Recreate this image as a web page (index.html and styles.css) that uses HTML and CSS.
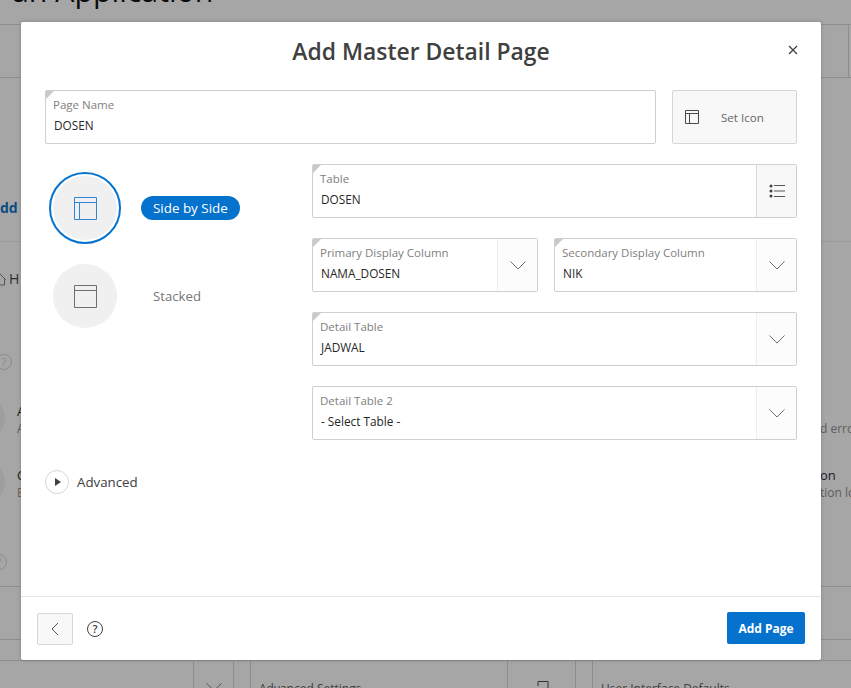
FILE: index.html
```html
<!DOCTYPE html>
<html lang="en">
<head>
<meta charset="utf-8">
<title>Add Master Detail Page</title>
<link rel="stylesheet" href="styles.css">
</head>
<body>
<div class="page">
  <div class="page-title"><span class="page-title-text">an Application</span></div>
  <div class="band">
    <span class="band-cell"></span>
  </div>
  <div class="bg-add"><span class="bg-add-text">dd</span></div>
  <div class="bg-home">
    <svg class="bg-house" width="6" height="13" viewBox="0 0 6 13"><path d="M-3 6.500L0 1L5.500 6.500H4.500V12H-1" fill="none" stroke="#5c4a63"/></svg>
    <span class="bg-home-text">H</span>
  </div>
  <div class="bg-help one"><span class="bg-q">?</span></div>
  <div class="bg-feature first">
    <span class="bg-disc"></span>
    <div class="bg-feature-text"><b>A</b><i>A</i></div>
    <div class="bg-feature-right"><b>&nbsp;</b><i>d error</i></div>
  </div>
  <div class="bg-feature">
    <span class="bg-disc"></span>
    <div class="bg-feature-text"><b>C</b><i class="rust">E</i></div>
    <div class="bg-feature-right"><b>on</b><i>tion lo</i></div>
  </div>
  <div class="bg-help two"><span class="bg-q">?</span></div>
  <div class="bg-rule first"></div>
  <div class="bg-rule second"></div>
  <div class="bg-tiles">
    <div class="tile-gap"></div>
    <div class="tile-btn"><svg width="16" height="8" viewBox="0 0 16 8"><path d="M.500.500L8 7.500L15.500.500" fill="none" stroke="#555"/></svg></div>
    <div class="tile-gap small"></div>
    <div class="tile-text">Advanced Settings</div>
    <div class="tile-btn wide"><svg width="14" height="16" viewBox="0 0 14 16"><path d="M3 5V.500H13V12H9M1 12H7" fill="none" stroke="#333"/></svg></div>
    <div class="tile-gap small"></div>
    <div class="tile-text">User Interface Defaults</div>
  </div>
</div>

<div class="modal">
  <header class="modal-head">
    <h1 class="modal-title">Add Master Detail Page</h1>
    <button class="close" aria-label="Close">
      <svg width="10" height="10" viewBox="0 0 10 10"><path d="M1 1L9 9M9 1L1 9" fill="none" stroke="#404040" stroke-width="1.300"/></svg>
    </button>
  </header>

  <main class="modal-body">
    <div class="top-row">
      <div class="field grow req">
        <div class="field-main">
          <span class="field-label">Page Name</span>
          <span class="field-value">DOSEN</span>
        </div>
      </div>
      <button class="set-icon">
        <svg width="14" height="14" viewBox="0 0 14 14"><path d="M.500.500H13.500V13.500H.500ZM.500 3.500H13.500M4.500 3.500V13.500" fill="none" stroke="#4a4a4a"/></svg>
        <span>Set Icon</span>
      </button>
    </div>

    <div class="columns">
      <div class="layouts">
        <div class="layout-option">
          <span class="disc-box">
            <span class="disc selected">
              <svg width="24" height="24" viewBox="0 0 24 24"><path d="M1.500 1.500H23.500V23.500H1.500ZM1.500 6.500H23.500M6.500 6.500V23.500" fill="none" stroke="#2f86d6"/></svg>
            </span>
          </span>
          <span class="layout-label pill">Side by Side</span>
        </div>
        <div class="layout-option">
          <span class="disc-box">
            <span class="disc">
              <svg width="24" height="24" viewBox="0 0 24 24"><path d="M1.500 1.500H23.500V23.500H1.500ZM1.500 6.500H23.500" fill="none" stroke="#6e6e6e"/></svg>
            </span>
          </span>
          <span class="layout-label">Stacked</span>
        </div>
      </div>

      <div class="fields">
        <div class="field req">
          <div class="field-main">
            <span class="field-label">Table</span>
            <span class="field-value">DOSEN</span>
          </div>
          <span class="field-btn filled">
            <svg width="16" height="14" viewBox="0 0 16 14"><g fill="#404040"><circle cx="2" cy="2" r="1.500"/><circle cx="2" cy="7" r="1.500"/><circle cx="2" cy="12" r="1.500"/></g><path d="M5 1.500H16M5 7H16M5 12.500H16" fill="none" stroke="#555"/></svg>
          </span>
        </div>

        <div class="field-pair">
          <div class="field primary req">
            <div class="field-main">
              <span class="field-label">Primary Display Column</span>
              <span class="field-value">NAMA_DOSEN</span>
            </div>
            <span class="field-btn">
              <svg class="chev" width="16" height="9" viewBox="0 0 16 9"><path d="M.500.500L8 8L15.500.500" fill="none" stroke="#707070"/></svg>
            </span>
          </div>
          <div class="field grow req">
            <div class="field-main">
              <span class="field-label">Secondary Display Column</span>
              <span class="field-value">NIK</span>
            </div>
            <span class="field-btn">
              <svg class="chev" width="16" height="9" viewBox="0 0 16 9"><path d="M.500.500L8 8L15.500.500" fill="none" stroke="#707070"/></svg>
            </span>
          </div>
        </div>

        <div class="field req">
          <div class="field-main">
            <span class="field-label">Detail Table</span>
            <span class="field-value">JADWAL</span>
          </div>
          <span class="field-btn">
            <svg class="chev" width="16" height="9" viewBox="0 0 16 9"><path d="M.500.500L8 8L15.500.500" fill="none" stroke="#707070"/></svg>
          </span>
        </div>

        <div class="field">
          <div class="field-main">
            <span class="field-label">Detail Table 2</span>
            <span class="field-value">- Select Table -</span>
          </div>
          <span class="field-btn">
            <svg class="chev" width="16" height="9" viewBox="0 0 16 9"><path d="M.500.500L8 8L15.500.500" fill="none" stroke="#707070"/></svg>
          </span>
        </div>
      </div>
    </div>

    <div class="advanced">
      <span class="advanced-toggle">
        <svg width="8" height="8" viewBox="0 0 8 8"><path d="M1 0L7 4L1 8Z" fill="#404040"/></svg>
      </span>
      <span class="advanced-label">Advanced</span>
    </div>
  </main>

  <footer class="modal-foot">
    <div class="foot-left">
      <button class="back" aria-label="Back">
        <svg width="8" height="14" viewBox="0 0 8 14"><path d="M7 1L1 7L7 13" fill="none" stroke="#4a5a6a"/></svg>
      </button>
      <span class="help">?</span>
    </div>
    <button class="add-page">Add Page</button>
  </footer>
</div>
</body>
</html>
```

FILE: styles.css
```css
* { box-sizing: border-box; }

html, body {
  margin: 0;
  padding: 0;
  height: 688px;
  overflow: hidden;
}

body {
  font-family: "Open Sans", "Noto Sans", "Liberation Sans", sans-serif;
  color: #262626;
  background: #a6a6a6;
}

button { font: inherit; cursor: pointer; }

/* dimmed application page behind the dialog */
.page {
  width: 851px;
  height: 688px;
  overflow: hidden;
  display: flex;
  flex-direction: column;
  background: #a6a6a6;
}

.page-title {
  height: 24px;
  padding-left: 12px;
  flex: none;
  overflow: hidden;
  font-size: 30.300px;
  line-height: 30px;
  white-space: nowrap;
  color: #0c0c0c;
}
.page-title-text { display: block; margin-top: -24px; }

.band {
  height: 54px;
  flex: none;
  display: flex;
  justify-content: flex-end;
  border-top: 1px solid #8e8e8e;
  border-bottom: 1px solid #8e8e8e;
}
.band-cell {
  width: 3px;
  border-left: 1px solid #8e8e8e;
}

.bg-add {
  height: 164px;
  flex: none;
  padding-top: 120px;
  border-bottom: 1px solid #9a9a9a;
  font-size: 14px;
  line-height: 20px;
  font-weight: 700;
  color: #0a4d84;
}
.bg-add-text { display: block; }

.bg-home {
  height: 47px;
  flex: none;
  display: flex;
  align-items: flex-end;
  gap: 3px;
  font-size: 14px;
  line-height: 20px;
  color: #2b2b2b;
}
.bg-house { margin-bottom: 3px; }

.bg-help {
  height: 20px;
  flex: none;
  display: flex;
  align-items: center;
}
.bg-help.one { margin: 63px 0 0 -4px; }
.bg-help.two { margin: 38px 0 0 -9px; }
.bg-q {
  width: 16px;
  height: 16px;
  flex: none;
  border: 1px solid #8c8c8c;
  border-radius: 50%;
  font-size: 11px;
  line-height: 14px;
  text-align: center;
  color: #8c8c8c;
}

.bg-feature {
  height: 64px;
  flex: none;
  display: flex;
  align-items: center;
}
.bg-feature.first { margin-top: 14px; }
.bg-disc {
  width: 48px;
  height: 48px;
  margin-left: -43px;
  margin-right: 12px;
  flex: none;
  border-radius: 50%;
  background: #9e9e9e;
}
.bg-feature-text,
.bg-feature-right {
  margin-top: 4px;
  display: flex;
  flex-direction: column;
  font-size: 12px;
  line-height: 17px;
}
.bg-feature b { font-weight: 400; font-size: 13px; color: #1c1c1c; }
.bg-feature i { font-style: normal; color: #5c5c5c; }
.bg-feature i.rust { color: #74605a; }
.bg-feature-right {
  margin-left: auto;
  width: 31px;
  white-space: nowrap;
  overflow: hidden;
}

.bg-rule {
  flex: none;
  border-top: 1px solid #8e8e8e;
}
.bg-rule.first { height: 53px; margin-top: 14px; }
.bg-rule.second { height: 21px; }

.bg-tiles {
  flex: 1;
  display: grid;
  grid-template-columns: 193px 41px 17px 256px 69px 17px 1fr;
  border-top: 1px solid #8e8e8e;
  font-size: 12px;
  color: #404040;
}
.tile-gap.small { border-right: 1px solid #8e8e8e; }
.tile-btn {
  display: flex;
  justify-content: center;
  padding-top: 22px;
  border-left: 1px solid #8e8e8e;
  border-right: 1px solid #8e8e8e;
}
.tile-btn.wide { padding-top: 20px; }
.tile-text {
  padding: 20px 0 0 8px;
  white-space: nowrap;
  line-height: 16px;
}

/* dialog */
.modal {
  position: absolute;
  left: 21px;
  top: 22px;
  width: 800px;
  height: 638px;
  display: flex;
  flex-direction: column;
  background: #fff;
  border-radius: 2px;
  box-shadow: 0 0 4px rgba(0, 0, 0, .2);
}

.modal-head {
  height: 68px;
  flex: none;
  display: flex;
  align-items: flex-start;
  justify-content: center;
  position: relative;
}
.modal-title {
  margin: 13px 0 0;
  font-size: 22.900px;
  line-height: 34px;
  font-weight: 600;
  color: #404040;
}
.close {
  position: absolute;
  right: 23px;
  top: 23px;
  width: 10px;
  height: 10px;
  padding: 0;
  border: 0;
  background: none;
  display: flex;
}

.modal-body {
  flex: 1;
  padding: 0 24px;
  display: flex;
  flex-direction: column;
}

.top-row {
  display: flex;
  gap: 16px;
  margin-bottom: 20px;
}

.field {
  position: relative;
  height: 54px;
  display: flex;
  background: #fff;
  border: 1px solid #cfcfcf;
  border-radius: 2px;
}
.field.req::before {
  content: "";
  position: absolute;
  left: 0;
  top: 0;
  border-style: solid;
  border-width: 8px 8px 0 0;
  border-color: #c9c9c9 transparent transparent transparent;
}
.field.grow { flex: 1; }
.field.primary { width: 226px; }

.field-main {
  flex: 1;
  min-width: 0;
  padding: 6px 7px 0;
  display: flex;
  flex-direction: column;
}
.field-label {
  font-size: 11.500px;
  line-height: 16px;
  color: #808080;
}
.field-value {
  margin-top: 4px;
  padding-left: 1px;
  font-size: 11.800px;
  line-height: 16px;
  color: #262626;
}
.field-btn {
  width: 40px;
  flex: none;
  display: flex;
  align-items: center;
  justify-content: center;
  background: #fcfcfc;
  border-left: 1px solid #eeeeee;
}
.field-btn.filled {
  background: #f8f8f8;
  border-left-color: #d6d6d6;
}

.set-icon {
  width: 125px;
  height: 54px;
  flex: none;
  padding: 0 0 0 12px;
  display: flex;
  align-items: center;
  gap: 22px;
  background: #f8f8f8;
  border: 1px solid #d6d6d6;
  border-radius: 2px;
  font-size: 11.600px;
  color: #666;
}

.columns {
  display: grid;
  grid-template-columns: 267px 485px;
}

.layouts {
  padding: 8px 0 0 4px;
  display: flex;
  flex-direction: column;
  gap: 20px;
}
.layout-option {
  display: flex;
  align-items: center;
  gap: 20px;
}
.disc-box {
  width: 72px;
  display: flex;
  justify-content: center;
}
.disc {
  width: 64px;
  height: 64px;
  display: flex;
  align-items: center;
  justify-content: center;
  border-radius: 50%;
  background: #f0f0f0;
}
.disc.selected {
  width: 72px;
  height: 72px;
  padding: 2px;
  background: #f0f0f0;
  background-clip: content-box;
  border: 2px solid #0572ce;
}
.layout-label {
  height: 24px;
  padding: 0 12px;
  border-radius: 12px;
  font-size: 13.200px;
  line-height: 24px;
  color: #777;
}
.layout-label.pill {
  background: #0572ce;
  color: #fff;
  font-size: 13.400px;
  font-weight: 500;
}

.fields {
  display: flex;
  flex-direction: column;
  gap: 20px;
}
.field-pair {
  display: flex;
  gap: 16px;
}

.advanced {
  margin-top: 30px;
  display: flex;
  align-items: center;
  gap: 8px;
}
.advanced-toggle {
  width: 24px;
  height: 24px;
  padding-left: 1px;
  display: flex;
  align-items: center;
  justify-content: center;
  border: 1px solid #d6d6d6;
  border-radius: 50%;
}
.advanced-label {
  font-size: 13.300px;
  line-height: 24px;
  color: #404040;
}

.modal-foot {
  height: 64px;
  flex: none;
  padding: 15px 16px;
  display: flex;
  justify-content: space-between;
  border-top: 1px solid #e6e6e6;
}
.foot-left {
  display: flex;
  align-items: center;
  gap: 14px;
}
.back {
  width: 36px;
  height: 32px;
  padding: 0;
  display: flex;
  align-items: center;
  justify-content: center;
  background: #f8f8f8;
  border: 1px solid #d6d6d6;
  border-radius: 2px;
}
.help {
  width: 16px;
  height: 16px;
  border: 1px solid #404040;
  border-radius: 50%;
  font-size: 11px;
  line-height: 14px;
  font-weight: 600;
  text-align: center;
  color: #404040;
}
.add-page {
  width: 78px;
  height: 32px;
  padding: 0;
  background: #0572ce;
  border: 0;
  border-radius: 2px;
  font-size: 12px;
  font-weight: 700;
  color: #fff;
}
```
